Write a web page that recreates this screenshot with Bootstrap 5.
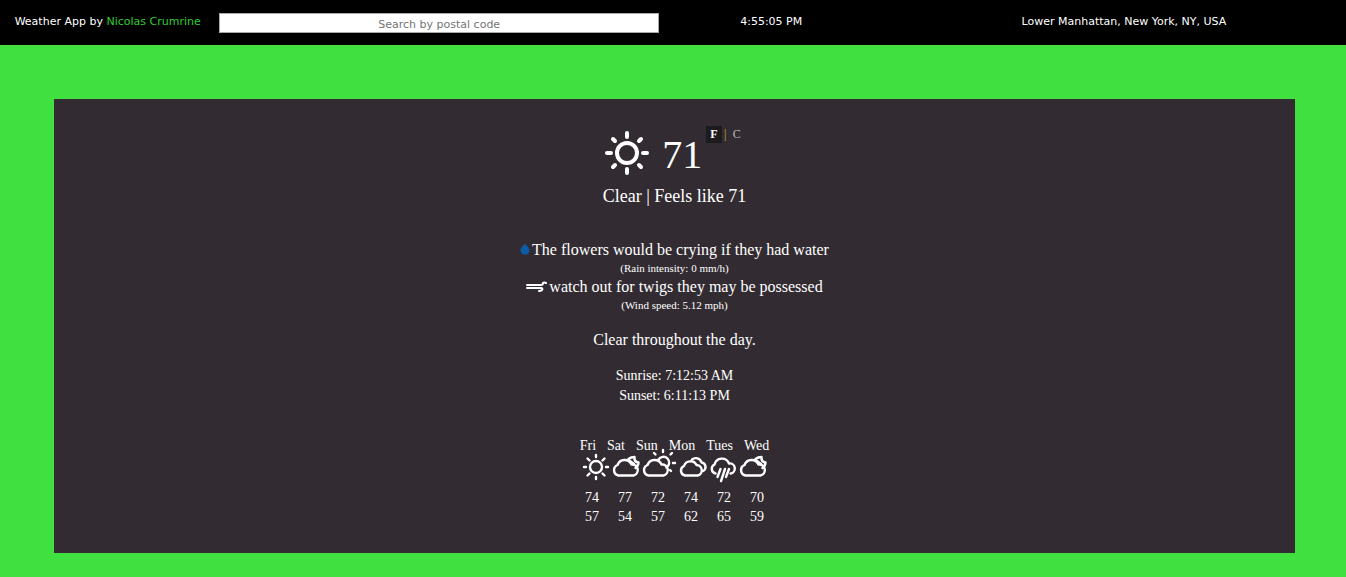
<!DOCTYPE html>
<html lang="en">
<head>
<meta charset="utf-8">
<meta name="viewport" content="width=device-width, initial-scale=1">
<title>Weather App</title>
<link href="https://cdn.jsdelivr.net/npm/bootstrap@5.3.0/dist/css/bootstrap.min.css" rel="stylesheet">
<style>
body { background: #41e041; color: #fff; font-family: "Liberation Serif", serif; }
.topbar { background: #000; height: 45px; font: 500 11px/18px "DejaVu Sans", sans-serif; padding-top: 13px; }
.topbar a { color: #32cd32; }
.w-side { width: 16%; }
.w-wide { width: 33%; }
.search { height: 20px; border: 1px solid #a9a9a9; border-radius: 0; padding: 2px 1px 0; font-size: 11px; width: 99%; }
.search::placeholder { color: #757575; }
.panel { background: #322c32; margin: 54px 51px 24px 54px; padding: 27px 0; }
.temp { font-size: 40px; line-height: 50px; }
.units { font-size: 12px; line-height: 17px; }
.unit { border: 0; padding: 0 4px; background: transparent; color: #bbb; }
.unit.on { background: #1e1b1e; color: #fff; font-weight: bold; }
.bar { color: #c8b43c; width: 7px; }
.feels { font-size: 18px; line-height: 24px; }
.remark { font-size: 16px; line-height: 20px; }
.with-icon { gap: 2px; }
.detail { font-size: 11px; line-height: 17px; }
.sun-times { font-size: 14px; line-height: 20px; }
.forecast { font-size: 14px; line-height: 19px; margin-top: 30px; }
.forecast th, .forecast td { font-weight: normal; padding: 0; }
.forecast svg { overflow: visible; display: block; }
.days { gap: 11px; }
.icons { gap: 2px; padding-bottom: 5px; }
.temps { gap: 19px; }
.ico { fill: none; stroke: #fff; stroke-width: 2.400; stroke-linecap: round; stroke-linejoin: round; }
.ico-lg { stroke-width: 4; }
.ico-wind { stroke-width: 2; }
</style>
</head>
<body>
<header class="topbar d-flex">
  <div class="w-side text-center text-nowrap">Weather App by <a href="#" class="text-decoration-none">Nicolas Crumrine</a></div>
  <form class="w-wide ms-1"><input type="text" class="search d-block text-center" placeholder="Search by postal code" aria-label="Search by postal code"></form>
  <div class="w-side text-center">4:55:05 PM</div>
  <div class="w-wide text-center ms-auto">Lower Manhattan, New York, NY, USA</div>
</header>
<main class="panel text-center">
  <div class="d-flex justify-content-center align-items-start">
    <svg class="ico ico-lg mt-1" width="46" height="46" viewBox="-23 -23 46 46" aria-hidden="true">
      <circle r="10"/>
      <path d="M0-20v4M0 20v-4M-20 0h4M20 0h-4M-14-14l2 2M14-14l-2 2M-14 14l2-2M14 14l-2-2"/>
    </svg>
    <div class="temp ms-2 ps-1 pt-1">71</div>
    <div class="units ms-1 d-flex">
      <button type="button" class="unit on">F</button><span class="bar">|</span><button type="button" class="unit">C</button>
    </div>
  </div>
  <div class="feels mt-1">Clear | Feels like 71</div>
  <div class="pt-2 mt-4">
    <div class="remark with-icon d-flex justify-content-center"><svg class="mt-1" width="10" height="13" viewBox="0 0 10 13" aria-hidden="true"><path fill="#0b5ba5" d="M5-1C6 2 9.500 3 9.500 6.500a4.500 4.200 0 0 1-9 0C.5 3 4 2 5-1z" style="overflow:visible"/></svg>
      The flowers would be crying if they had water</div>
    <div class="detail">(Rain intensity: 0 mm/h)</div>
    <div class="remark with-icon d-flex justify-content-center"><svg class="ico ico-wind mt-1" width="21" height="12" viewBox="0 0 21 12" aria-hidden="true"><path d="M1 4h14q2 0 2-2 1-1 3 0M1 7h14q2 0 1 2-1 1-3 1"/></svg>
      watch out for twigs they may be possessed</div>
    <div class="detail">(Wind speed: 5.12 mph)</div>
  </div>
  <div class="remark mt-3">Clear throughout the day.</div>
  <div class="sun-times mt-3">
    <div>Sunrise: 7:12:53 AM</div>
    <div>Sunset: 6:11:13 PM</div>
  </div>
  <table class="forecast d-block">
    <thead class="d-block">
      <tr class="days d-flex justify-content-center"><th>Fri</th><th>Sat</th><th>Sun</th><th>Mon</th><th>Tues</th><th>Wed</th></tr>
    </thead>
    <tbody class="d-block">
      <tr class="icons d-flex justify-content-center">
        <td><svg class="ico" width="28" height="28" viewBox="0 0 28 28" role="img" aria-label="Clear"><circle cx="14" cy="12" r="6"/><path d="M14 0v2M14 22v2M2 12h2M24 12h2M5.500 3.500l2 2M22.500 3.500l-2 2M5.500 20.500l2-2M22.500 20.500l-2-2"/></svg></td>
        <td><svg class="ico" width="28" height="28" viewBox="0 0 28 28" role="img" aria-label="Cloudy night"><path d="M6.500 20.500A5.500 5.500 0 0 1 5.500 10 7.500 7.500 0 0 1 19.500 9.500 5.600 5.600 0 0 1 21.500 20.500Z"/><path d="M16.500 4Q19 2 22.500 2q-.5 5 4 5.500 0 3-3 5.500M18 6l4 3"/></svg></td>
        <td><svg class="ico" width="35" height="28" viewBox="0 0 35 28" role="img" aria-label="Partly sunny"><path d="M6.500 20.500A5.500 5.500 0 0 1 5.500 10 7.500 7.500 0 0 1 19.500 9.500 5.600 5.600 0 0 1 21.500 20.500Z"/><path d="M16.500 4.500A5.800 5.800 0 1 1 24.500 12.500M21-5v2M12-2l1.500 1.500M30-2l-1.500 1.500M31 8h2M28 15l1 1"/></svg></td>
        <td><svg class="ico" width="28" height="28" viewBox="0 0 28 28" role="img" aria-label="Cloudy"><path d="M6 20.500A5 5 0 0 1 5 11 6.800 6.800 0 0 1 17.500 10 5.300 5.300 0 0 1 18.500 20.500Z"/><path d="M13 4.500a6 6 0 0 1 9.500 3A4.500 4.500 0 0 1 24 16"/></svg></td>
        <td><svg class="ico" width="28" height="28" viewBox="0 0 28 28" role="img" aria-label="Rain"><path d="M6.500 18.500A4.800 4.800 0 0 1 5.500 9.500 7.600 7.600 0 0 1 20 8.500 5 5 0 0 1 21.500 18.500M11.500 14l-3 8M16 14l-4 12M20 14l-3 8"/></svg></td>
        <td><svg class="ico" width="28" height="28" viewBox="0 0 28 28" role="img" aria-label="Cloudy night"><path d="M6.500 20.500A5.500 5.500 0 0 1 5.500 10 7.500 7.500 0 0 1 19.500 9.500 5.600 5.600 0 0 1 21.500 20.500Z"/><path d="M16.500 4Q19 2 22.500 2q-.5 5 4 5.500 0 3-3 5.500M18 6l4 3"/></svg></td>
      </tr>
      <tr class="temps d-flex justify-content-center"><td>74</td><td>77</td><td>72</td><td>74</td><td>72</td><td>70</td></tr>
      <tr class="temps d-flex justify-content-center"><td>57</td><td>54</td><td>57</td><td>62</td><td>65</td><td>59</td></tr>
    </tbody>
  </table>
</main>
<script src="https://cdn.jsdelivr.net/npm/bootstrap@5.3.0/dist/js/bootstrap.bundle.min.js"></script>
</body>
</html>
